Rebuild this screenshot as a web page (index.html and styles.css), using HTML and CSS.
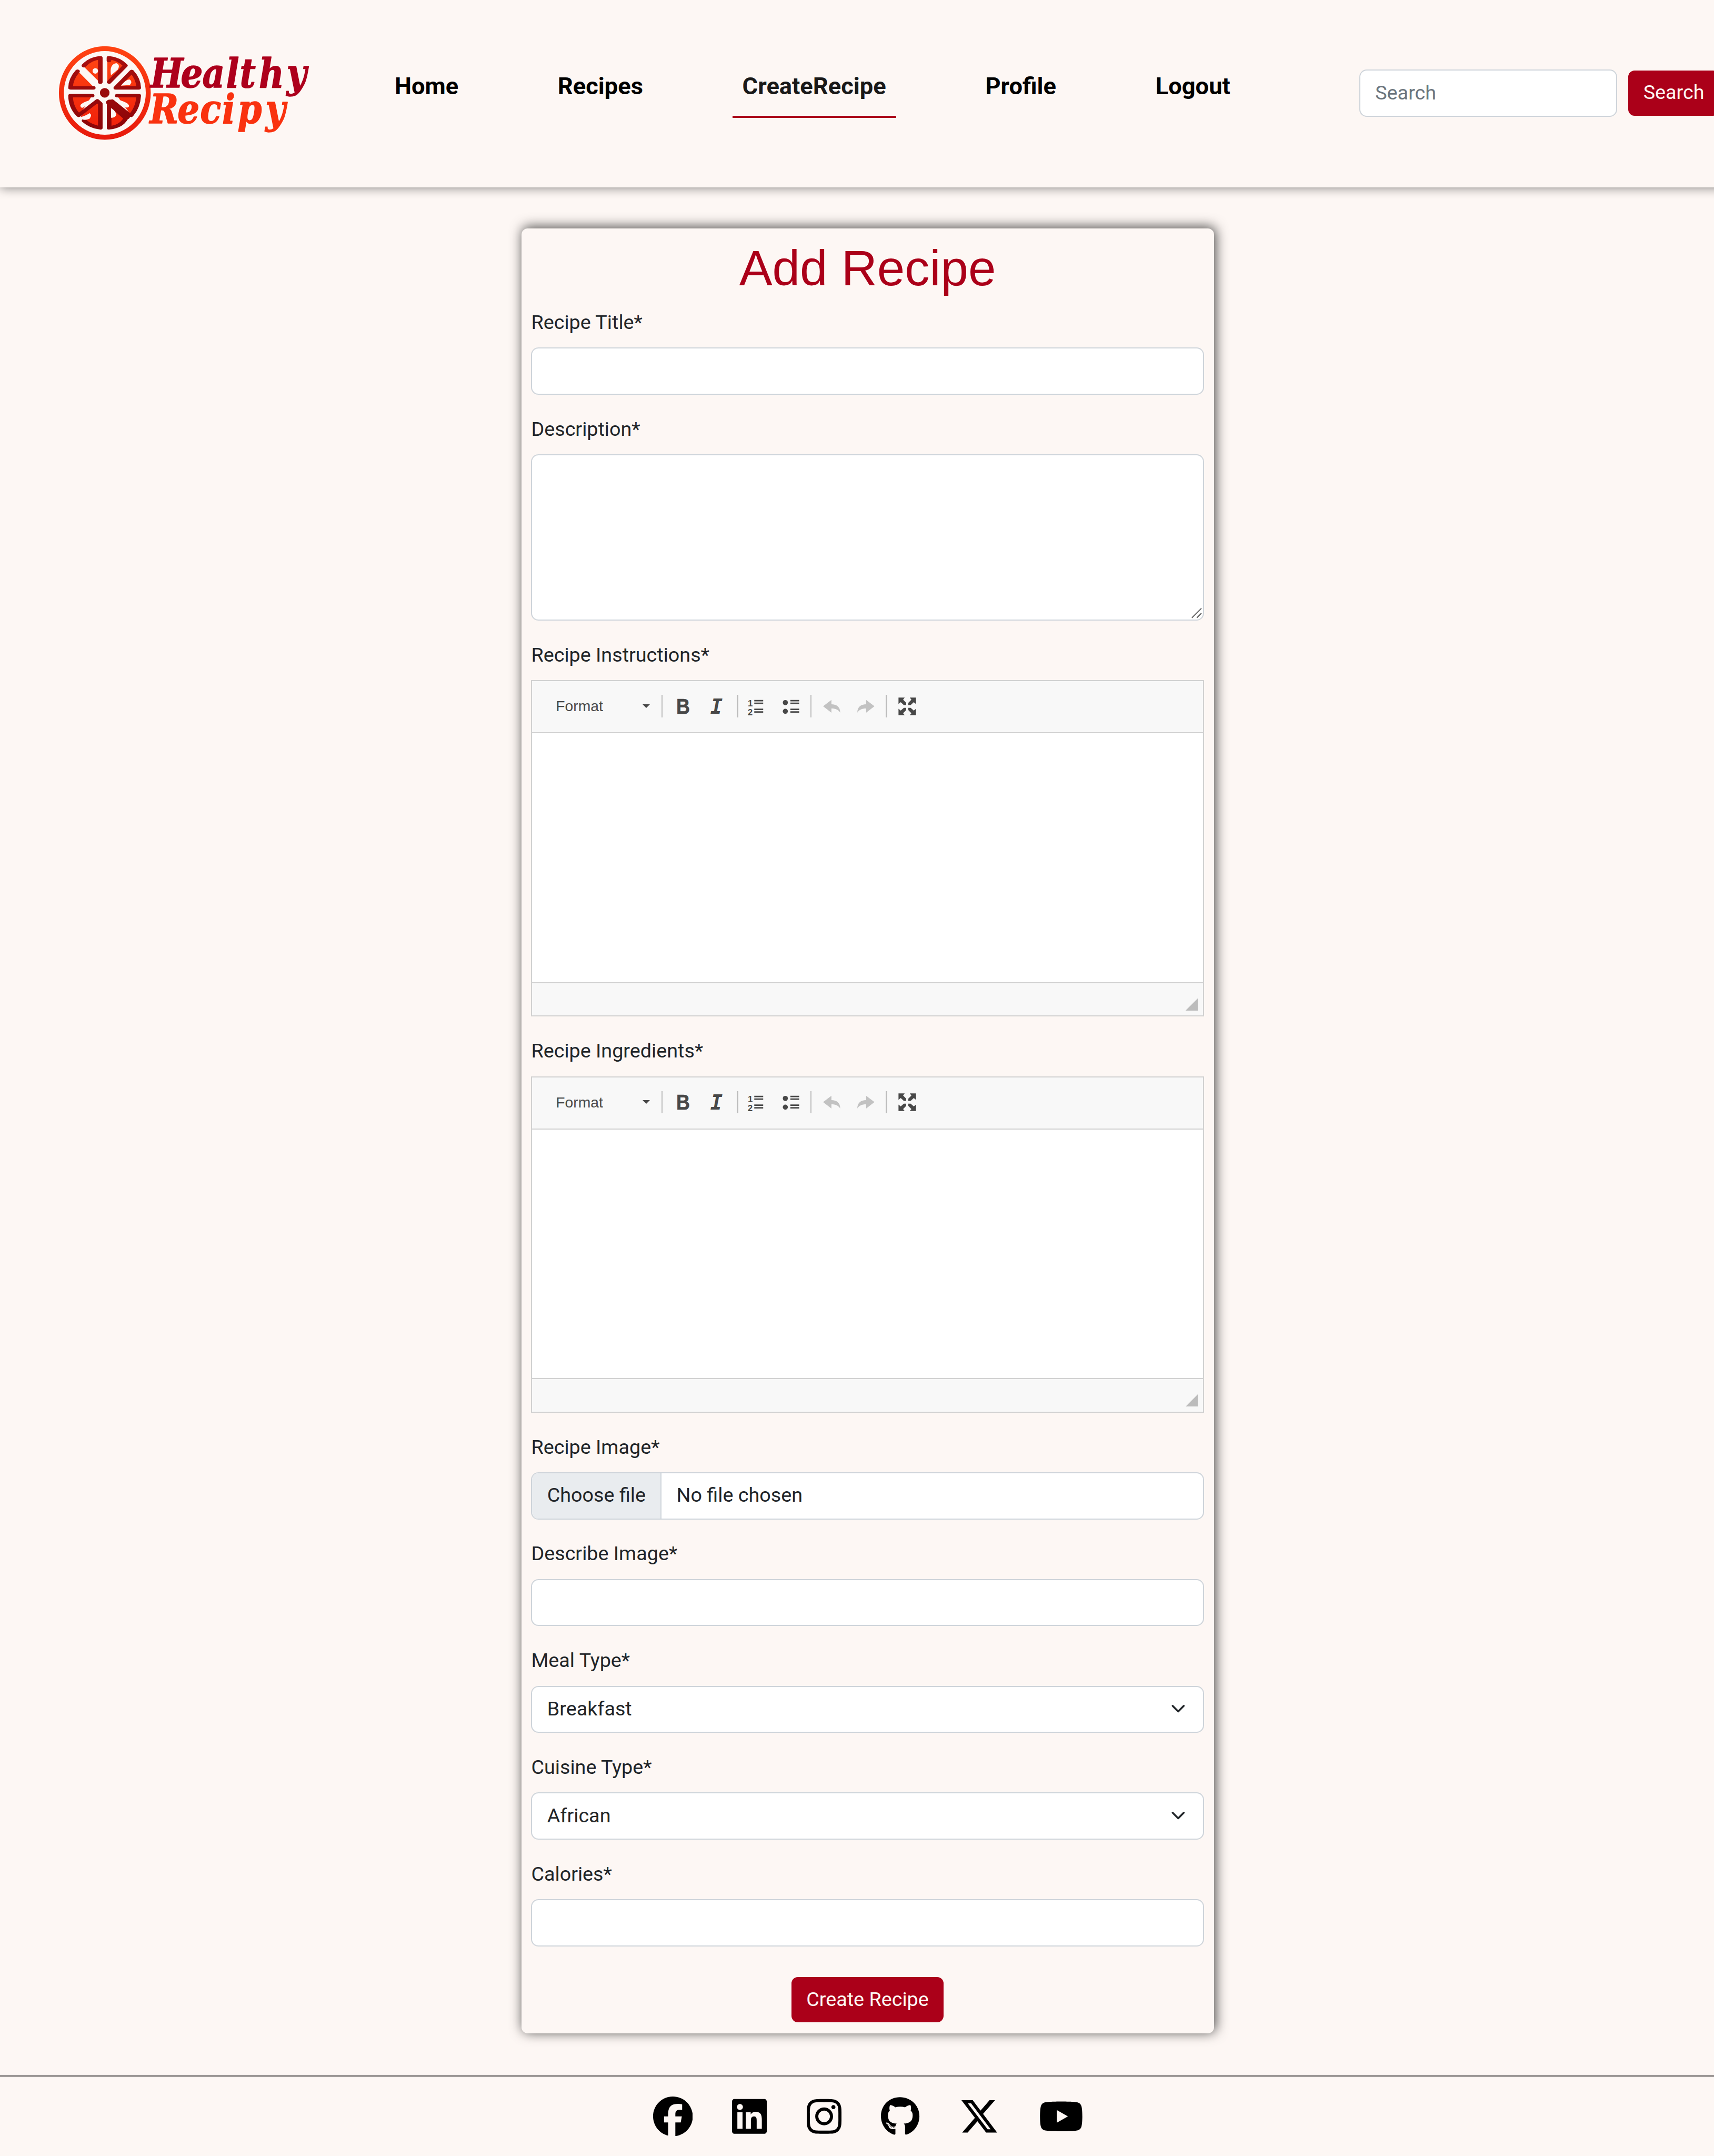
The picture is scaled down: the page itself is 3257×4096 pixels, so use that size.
FILE: index.html
```html
<!DOCTYPE html>
<html lang="en">
<head>
<meta charset="utf-8">
<title>Healthy Recipy - Add Recipe</title>
<link rel="stylesheet" href="styles.css">
</head>
<body>
<svg class="sprite" aria-hidden="true">
  <symbol id="i-bold" viewBox="0 0 16 16"><text x="3" y="14.100" font-family="Liberation Sans, Arial, sans-serif" font-weight="700" font-size="17" textLength="11" lengthAdjust="spacingAndGlyphs" stroke="#484848" stroke-width=".3">B</text></symbol>
  <symbol id="i-italic" viewBox="0 0 16 16"><text x="2.4" y="14" font-family="DejaVu Sans Mono, monospace" font-weight="700" font-style="italic" font-size="16.5">I</text></symbol>
  <symbol id="i-ol" viewBox="0 0 16 16">
    <text x="1.7" y="8.1" font-family="Liberation Sans, Arial, sans-serif" font-weight="700" font-size="7.2">1</text>
    <text x="1.6" y="15.1" font-family="Liberation Sans, Arial, sans-serif" font-weight="700" font-size="7.2">2</text>
    <path d="M6.9 2.9h7.2V4H6.9zM6.9 5h7.2v1.1H6.9zM6.9 9.9h7.2V11H6.9zM6.9 12h7.2v1.1H6.9z"/>
  </symbol>
  <symbol id="i-ul" viewBox="0 0 16 16">
    <circle cx="3.95" cy="5" r="2.05"/><circle cx="3.95" cy="12" r="2.05"/>
    <path d="M8 2.9h7.1V4H8zM8 5h7.1v1.1H8zM8 9.9h7.1V11H8zM8 12h7.1v1.1H8z"/>
  </symbol>
  <symbol id="i-undo" viewBox="0 0 16 16"><path d="M1.3 8 8 2.9v3.5c4 .1 7.1 1.9 7.1 6.7C13.7 10.9 11.5 9.8 8 9.8v3.300z"/></symbol>
  <symbol id="i-max" viewBox="0 0 16 16">
    <path id="max-arrow" d="M1 1H6L4.7 2.6 7.2 5.2V7H5.3L2.8 4.7 1 6.2z"/>
    <use href="#max-arrow" transform="translate(16.1 0) scale(-1 1)"/>
    <use href="#max-arrow" transform="translate(0 16.2) scale(1 -1)"/>
    <use href="#max-arrow" transform="translate(16.1 16.2) scale(-1 -1)"/>
  </symbol>
</svg>

<header class="header">
  <a class="logo" href="#" aria-label="Healthy Recipy">
    <svg viewBox="40 30 220 90">
      <defs>
        <linearGradient id="ring" x1="0" y1="0" x2="0" y2="1"><stop offset="0" stop-color="#ff4312"/><stop offset="1" stop-color="#e81a0c"/></linearGradient>
        <linearGradient id="flesh" gradientUnits="userSpaceOnUse" x1="0" y1="225" x2="0" y2="755"><stop offset="0" stop-color="#ff4513"/><stop offset="1" stop-color="#f0200a"/></linearGradient>
        <linearGradient id="rind" gradientUnits="userSpaceOnUse" x1="0" y1="225" x2="0" y2="755"><stop offset="0" stop-color="#a80f0f"/><stop offset="1" stop-color="#8c0508"/></linearGradient>
      </defs>
      <ellipse cx="84.6" cy="74.75" rx="35" ry="35.7" fill="none" stroke="url(#ring)" stroke-width="4"/>
      <!-- citrus segments -->
      <g transform="translate(33.333 20) scale(.1488 .1111)" stroke-linejoin="round" stroke-linecap="round">
        <g fill="url(#flesh)">
          <path d="M320 237V420L226 296Q265 245 320 237z"/>
          <path d="M358 237V420L462 296Q415 245 358 237z"/>
          <path d="M200 336L290 458H157Q160 385 200 336z"/>
          <path d="M490 336L400 458H530Q528 385 490 336z"/>
          <path d="M158 512H276L206 655Q160 595 158 512z"/>
          <path d="M530 512H410L486 655Q526 595 530 512z"/>
          <path d="M304 550L320 570V748Q265 740 226 695L215 662z"/>
          <path d="M366 555L462 668Q440 730 366 748z"/>
        </g>
        <g fill="none" stroke="url(#rind)" stroke-width="25">
          <path d="M231 295Q265 245 320 238V414"/>
          <path d="M367 258V238Q420 245 456 294L368 414"/>
          <path d="M197 336Q160 390 159 456H282"/>
          <path d="M490 338Q526 390 528 456H404z"/>
          <path d="M276 513H159Q160 600 203 655L304 551L320 570V746Q270 738 232 694"/>
          <path d="M412 513H528Q524 600 486 655"/>
          <path d="M378 556L368 580V746Q430 738 456 682"/>
        </g>
        <path d="M372 562L460 665" stroke="url(#rind)" stroke-width="42"/>
        <path d="M384 551L478 652" stroke="url(#rind)" stroke-width="22"/>
        <g fill="#fdf7f4">
          <ellipse cx="293" cy="333" rx="15" ry="20"/>
          <path d="M378 365Q368 285 407 277Q430 290 414 325z"/>
          <path d="M432 440Q462 390 480 396Q496 410 480 435z"/>
          <path d="M212 582Q226 555 296 536L226 600Q212 602 212 582z"/>
          <path d="M397 536Q476 560 476 590Q468 606 454 594z"/>
          <path d="M214 668Q240 660 262 640Q278 650 262 680Q240 694 222 684z"/>
          <path d="M378 602Q410 630 406 655Q396 676 378 672z"/>
        </g>
        <ellipse cx="344" cy="492" rx="26" ry="35" fill="url(#rind)"/>
      </g>
      <g transform="scale(.86 1)" font-family="DejaVu Serif, serif" font-weight="700" font-style="italic" font-size="32.5" stroke-width=".6" stroke-linejoin="round">
        <text y="70.5" fill="#ad001c" stroke="#ad001c" x="141.2 169.5 189.8 211.9 224.7 242.8 268.6">Healthy</text>
        <text y="99.1" fill="#f9320f" stroke="#f9320f" x="140.5 166.5 187.7 208.2 222.8 248.8">Recipy</text>
      </g>
    </svg>
  </a>
  <nav class="nav">
    <a href="#">Home</a>
    <a href="#">Recipes</a>
    <a href="#" class="active">CreateRecipe</a>
    <a href="#">Profile</a>
    <a href="#">Logout</a>
  </nav>
  <form class="search">
    <input class="control" type="text" placeholder="Search">
    <button class="btn" type="button">Search</button>
  </form>
</header>

<main class="card">
  <h1>Add Recipe</h1>

  <div class="field"><label>Recipe Title*</label><input class="control" type="text"></div>

  <div class="field">
    <label>Description*</label>
    <div class="area">
      <textarea class="control"></textarea>
      <svg class="grip" viewBox="0 0 10 10"><path d="M1.2 8.8 8.9 1.1M5.2 8.8 8.9 5.1"/></svg>
    </div>
  </div>

  <div class="field">
    <label>Recipe Instructions*</label>
    <div class="editor">
      <div class="toolbar">
        <span class="format">Format<i class="caret"></i></span><i class="sep"></i>
        <span class="group"><svg><use href="#i-bold"/></svg><svg><use href="#i-italic"/></svg></span><i class="sep"></i>
        <span class="group lists"><svg><use href="#i-ol"/></svg><svg><use href="#i-ul"/></svg></span><i class="sep"></i>
        <span class="group off"><svg><use href="#i-undo"/></svg><svg class="flip"><use href="#i-undo"/></svg></span><i class="sep"></i>
        <span class="group"><svg><use href="#i-max"/></svg></span>
      </div>
      <div class="content"></div>
      <div class="status"><i class="resizer"></i></div>
    </div>
  </div>

  <div class="field">
    <label>Recipe Ingredients*</label>
    <div class="editor">
      <div class="toolbar">
        <span class="format">Format<i class="caret"></i></span><i class="sep"></i>
        <span class="group"><svg><use href="#i-bold"/></svg><svg><use href="#i-italic"/></svg></span><i class="sep"></i>
        <span class="group lists"><svg><use href="#i-ol"/></svg><svg><use href="#i-ul"/></svg></span><i class="sep"></i>
        <span class="group off"><svg><use href="#i-undo"/></svg><svg class="flip"><use href="#i-undo"/></svg></span><i class="sep"></i>
        <span class="group"><svg><use href="#i-max"/></svg></span>
      </div>
      <div class="content"></div>
      <div class="status"><i class="resizer"></i></div>
    </div>
  </div>

  <div class="field">
    <label>Recipe Image*</label>
    <div class="control file"><span class="choose">Choose file</span><span>No file chosen</span></div>
  </div>

  <div class="field"><label>Describe Image*</label><input class="control" type="text"></div>

  <div class="field">
    <label>Meal Type*</label>
    <div class="control select"><span>Breakfast</span><svg viewBox="0 0 16 16"><path d="m2 5 6 6 6-6"/></svg></div>
  </div>

  <div class="field">
    <label>Cuisine Type*</label>
    <div class="control select"><span>African</span><svg viewBox="0 0 16 16"><path d="m2 5 6 6 6-6"/></svg></div>
  </div>

  <div class="field"><label>Calories*</label><input class="control" type="text"></div>

  <div class="actions"><button class="btn" type="button">Create Recipe</button></div>
</main>

<footer class="footer">
  <svg viewBox="0 0 512 512"><path d="M512 256C512 114.6 397.4 0 256 0S0 114.6 0 256C0 376 82.7 476.8 194.2 504.5V334.2H141.4V256h52.8V222.3c0-87.1 39.4-127.5 125-127.5c16.2 0 44.2 3.2 55.7 6.4V172c-6-.6-16.5-1-29.6-1c-42 0-58.2 15.9-58.2 57.2V256h83.6l-14.4 78.2H287V510.1C413.8 494.8 512 386.9 512 256z"/></svg>
  <svg class="w448" viewBox="0 0 448 512"><path d="M416 32H31.9C14.3 32 0 46.5 0 64.3v383.4C0 465.5 14.3 480 31.9 480H416c17.6 0 32-14.5 32-32.3V64.3c0-17.8-14.4-32.3-32-32.3zM135.4 416H69V202.2h66.5V416zm-33.2-243c-21.3 0-38.5-17.3-38.5-38.5S80.9 96 102.2 96c21.2 0 38.5 17.3 38.5 38.5 0 21.3-17.2 38.5-38.5 38.5zm282.1 243h-66.4V312c0-24.8-.5-56.7-34.5-56.7-34.6 0-39.9 27-39.9 54.9V416h-66.4V202.2h63.7v29.2h.9c8.9-16.8 30.6-34.5 62.9-34.5 67.2 0 79.7 44.3 79.7 101.9V416z"/></svg>
  <svg class="w448" viewBox="0 0 448 512"><path d="M224.1 141c-63.6 0-114.9 51.3-114.9 114.9s51.3 114.9 114.9 114.9S339 319.5 339 255.9 287.7 141 224.1 141zm0 189.6c-41.1 0-74.7-33.5-74.7-74.7s33.5-74.7 74.7-74.7 74.7 33.5 74.7 74.7-33.6 74.7-74.7 74.7zm146.4-194.3c0 14.9-12 26.8-26.8 26.8-14.9 0-26.8-12-26.8-26.8s12-26.8 26.8-26.8 26.8 12 26.8 26.8zm76.1 27.2c-1.7-35.9-9.9-67.7-36.2-93.9-26.2-26.2-58-34.4-93.9-36.2-37-2.1-147.9-2.1-184.9 0-35.8 1.7-67.6 9.9-93.9 36.1s-34.4 58-36.2 93.9c-2.1 37-2.1 147.9 0 184.9 1.7 35.9 9.9 67.7 36.2 93.9s58 34.4 93.9 36.2c37 2.1 147.9 2.1 184.9 0 35.9-1.7 67.7-9.9 93.9-36.2 26.2-26.2 34.4-58 36.2-93.9 2.1-37 2.1-147.8 0-184.8zM398.8 388c-7.8 19.6-22.9 34.7-42.6 42.6-29.5 11.7-99.5 9-132.1 9s-102.7 2.6-132.1-9c-19.6-7.8-34.7-22.9-42.6-42.6-11.7-29.5-9-99.5-9-132.1s-2.6-102.7 9-132.1c7.8-19.6 22.9-34.7 42.6-42.6 29.5-11.7 99.5-9 132.1-9s102.7-2.6 132.1 9c19.6 7.8 34.7 22.9 42.6 42.6 11.7 29.5 9 99.5 9 132.1s2.7 102.7-9 132.1z"/></svg>
  <svg class="w496" viewBox="0 0 496 512"><path d="M165.9 397.4c0 2-2.3 3.6-5.2 3.6-3.3.3-5.6-1.3-5.6-3.6 0-2 2.3-3.6 5.2-3.6 3-.3 5.6 1.3 5.6 3.6zm-31.1-4.5c-.7 2 1.3 4.3 4.3 4.9 2.6 1 5.6 0 6.2-2s-1.3-4.3-4.3-5.2c-2.6-.7-5.5.3-6.2 2.3zm44.2-1.7c-2.9.7-4.9 2.6-4.6 4.9.3 2 2.9 3.3 5.9 2.6 2.9-.7 4.9-2.6 4.6-4.6-.3-1.9-3-3.2-5.9-2.9zM244.8 8C106.1 8 0 113.3 0 252c0 110.9 69.8 205.8 169.5 239.2 12.8 2.3 17.3-5.6 17.3-12.1 0-6.2-.3-40.4-.3-61.4 0 0-70 15-84.7-29.8 0 0-11.4-29.1-27.8-36.6 0 0-22.9-15.7 1.6-15.4 0 0 24.9 2 38.6 25.8 21.9 38.6 58.6 27.5 72.9 20.9 2.3-16 8.8-27.1 16-33.7-55.9-6.2-112.3-14.3-112.3-110.5 0-27.5 7.6-41.3 23.6-58.9-2.6-6.5-11.1-33.3 2.6-67.9 20.9-6.5 69 27 69 27 20-5.6 41.5-8.5 62.8-8.5s42.8 2.9 62.8 8.5c0 0 48.1-33.6 69-27 13.7 34.7 5.2 61.4 2.6 67.9 16 17.7 25.8 31.5 25.8 58.9 0 96.5-58.9 104.2-114.8 110.5 9.2 7.9 17 22.9 17 46.4 0 33.7-.3 75.4-.3 83.6 0 6.5 4.6 14.4 17.3 12.1C428.2 457.8 496 362.9 496 252 496 113.3 383.5 8 244.8 8zM97.2 352.9c-1.3 1-1 3.3.7 5.2 1.6 1.6 3.9 2.3 5.2 1 1.3-1 1-3.3-.7-5.2-1.6-1.6-3.9-2.3-5.2-1zm-10.8-8.1c-.7 1.3.3 2.9 2.3 3.9 1.6 1 3.6.7 4.3-.7.7-1.3-.3-2.9-2.3-3.9-2-.6-3.6-.3-4.3.7zm32.4 35.6c-1.6 1.3-1 4.3 1.3 6.2 2.3 2.3 5.2 2.6 6.5 1 1.3-1.3.7-4.3-1.3-6.2-2.2-2.3-5.2-2.6-6.5-1zm-11.4-14.7c-1.6 1-1.6 3.6 0 5.9 1.6 2.3 4.3 3.3 5.6 2.3 1.6-1.3 1.6-3.9 0-6.2-1.4-2.3-4-3.3-5.6-2z"/></svg>
  <svg viewBox="0 0 512 512"><path d="M389.2 48h70.6L305.6 224.2 487 464H345L233.7 318.6 106.5 464H35.8L200.7 275.5 26.8 48H172.4L272.9 180.9 389.2 48zM364.4 421.8h39.1L151.1 88h-42L364.4 421.8z"/></svg>
  <svg class="w576" viewBox="0 0 576 512"><path d="M549.655 124.083c-6.281-23.65-24.787-42.276-48.284-48.597C458.781 64 288 64 288 64S117.22 64 74.629 75.486c-23.497 6.322-42.003 24.947-48.284 48.597-11.412 42.867-11.412 132.305-11.412 132.305s0 89.438 11.412 132.305c6.281 23.65 24.787 41.5 48.284 47.821C117.22 448 288 448 288 448s170.78 0 213.371-11.486c23.497-6.321 42.003-24.171 48.284-47.821 11.412-42.867 11.412-132.305 11.412-132.305s0-89.438-11.412-132.305zm-317.51 213.508V175.185l142.739 81.205-142.739 81.201z"/></svg>
</footer>
</body>
</html>
```

FILE: styles.css
```css
/* 1rem = 10 layout units; the whole page scales from here */
html {
  font-size: 23.5844px;
  overflow: hidden;
}

* { box-sizing: border-box; }

body {
  margin: 0;
  width: 139.8rem;
  background: #fdf7f4;
  color: #212529;
  font: 400 1.6rem/1.5 Roboto, sans-serif;
}

svg { display: block; }
.sprite { display: none; }

/* header */
.header {
  display: flex;
  align-items: flex-start;
  height: 15.1rem;
  padding-left: 4rem;
  box-shadow: 0 .1rem .8rem rgba(0, 0, 0, .45);
}
.logo { margin-top: 3rem; }
.logo svg { width: 22rem; height: 9rem; }

.nav {
  display: flex;
  gap: 6.4rem;
  margin: 5.5rem 0 0 5rem;
}
.nav a {
  height: 4rem;
  padding: 0 .8rem;
  border-bottom: .2rem solid transparent;
  color: #000;
  font-size: 1.92rem;
  font-weight: 700;
  line-height: 2.88rem;
  text-decoration: none;
}
.nav .active { color: #191919; border-color: #ab0019; }

.search {
  display: flex;
  gap: .8rem;
  margin: 5.6rem 1.2rem 0 auto;
}
.search .control { width: 20.8rem; }

/* controls */
.control {
  display: block;
  width: 100%;
  height: 3.8rem;
  margin: 0;
  padding: .55rem 1.2rem .65rem;
  border: .1rem solid #ced4da;
  border-radius: .6rem;
  background: #fff;
  color: #212529;
  font: inherit;
}
.control::placeholder { color: #6c757d; opacity: 1; }

.btn {
  height: 3.8rem;
  padding: 0 1.2rem .1rem;
  border: .1rem solid #fdf7f4;
  border-radius: .6rem;
  background: #ab0019;
  color: #fdf7f4;
  font: inherit;
  white-space: nowrap;
}

/* card */
.card {
  width: 55.8rem;
  height: 145.4rem;
  margin: 3.3rem auto 3.4rem;
  padding: .8rem;
  border-radius: .5rem;
  box-shadow: .1rem -.1rem 1rem rgba(0, 0, 0, .7);
  background: #fdf7f4;
}
.card h1 {
  margin: 0 0 .8rem;
  color: #ab0019;
  font: 400 4rem/1.2 "Liberation Sans", Arial, sans-serif;
  text-align: center;
}
.field { margin-bottom: 1.6rem; }
.field label { display: block; padding-bottom: .9rem; line-height: 2.3rem; }

.area { position: relative; }
.area .control { height: 13.4rem; resize: none; }
.grip {
  position: absolute;
  right: .1rem;
  bottom: .1rem;
  width: 1rem;
  height: 1rem;
  fill: none;
  stroke: #5c5c5c;
  stroke-width: .8;
}

/* rich text editor */
.editor { border: .1rem solid #d1d1d1; background: #fff; height: 27.1rem; display: flex; flex-direction: column; }
.toolbar {
  display: flex;
  align-items: flex-start;
  height: 4.2rem;
  padding: 1.1rem 0 0 1.9rem;
  border-bottom: .1rem solid #d1d1d1;
  background: #f8f8f8;
  fill: #484848;
}
.toolbar svg { width: 1.6rem; height: 1.6rem; }
.format {
  display: flex;
  align-items: center;
  justify-content: space-between;
  width: 7.6rem;
  height: 1.8rem;
  color: #484848;
  font: 1.2rem/1.8rem "Liberation Sans", Arial, sans-serif;
}
.caret {
  border: .3rem solid transparent;
  border-top-color: #484848;
  border-bottom: 0;
}
.sep { width: .1rem; height: 1.8rem; margin: 0 .8rem; background: #bcbcbc; }
.format + .sep { margin-left: .9rem; }
.group { display: flex; gap: 1.2rem; padding-top: .1rem; }
.lists { margin-left: -.2rem; }
.off { fill: #c2c2c2; }
.flip { transform: scaleX(-1); }
.content { flex: 1; }
.status {
  display: flex;
  align-items: flex-end;
  justify-content: flex-end;
  height: 2.7rem;
  padding: .4rem;
  border-top: .1rem solid #d1d1d1;
  background: #f8f8f8;
}
.resizer {
  width: 1rem;
  height: 1rem;
  background: #bcbcbc;
  clip-path: polygon(100% 0, 100% 100%, 0 100%);
}

/* file and select */
.file { display: flex; gap: 1.2rem; padding: 0; overflow: hidden; line-height: 3.5rem; }
.choose { padding: 0 1.2rem; border-right: .1rem solid #ced4da; background: #e9ecef; }
.select { display: flex; align-items: center; justify-content: space-between; }
.select svg {
  width: 1.6rem;
  height: 1.2rem;
  fill: none;
  stroke: #212529;
  stroke-width: 2;
  stroke-linecap: round;
  stroke-linejoin: round;
}
.actions { display: flex; justify-content: center; padding-top: .8rem; }

/* footer */
.footer {
  display: flex;
  justify-content: center;
  gap: 3.2rem;
  padding: 1.6rem 0 1.6rem .1rem;
  border-top: .1rem solid #4b4848;
}
.footer svg { width: 3.2rem; height: 3.2rem; }
.footer .w448 { width: 2.8rem; }
.footer .w496 { width: 3.1rem; }
.footer .w576 { width: 3.6rem; }
```
